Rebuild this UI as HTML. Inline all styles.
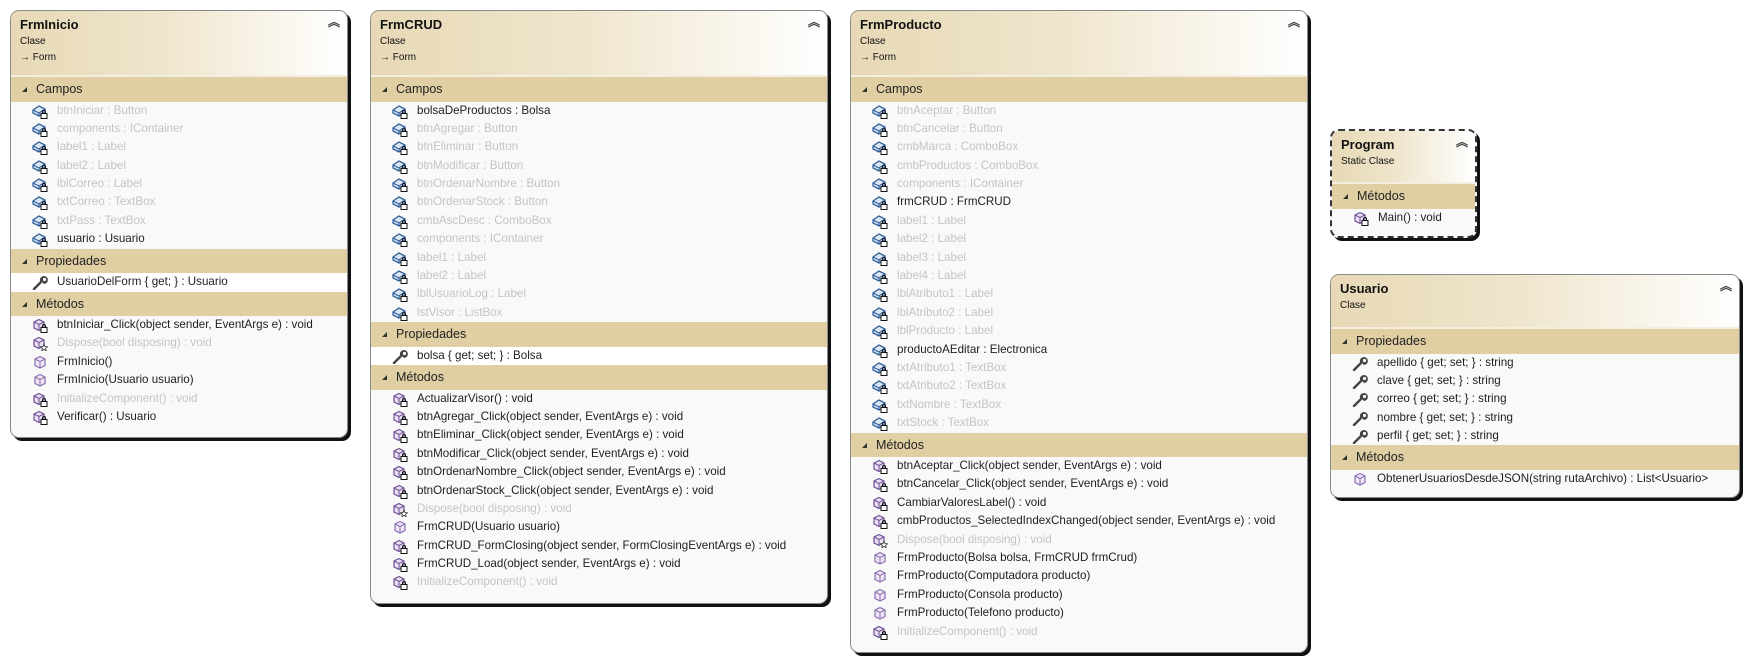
<!DOCTYPE html>
<html><head><meta charset="utf-8"><style>
body{margin:0;width:1747px;height:660px;background:#fff;position:relative;overflow:hidden;font-family:"Liberation Sans",sans-serif;}
.b{position:absolute;border:1px solid #8a8a8a;border-radius:9px;background:#f9f9f9;box-shadow:3px 3px 0 #111;overflow:hidden;box-sizing:border-box}
.h{height:66px;background:linear-gradient(90deg,#e7d9b6 0%,#efe5cc 45%,#fff 100%);position:relative;border-bottom:2px solid #f4eee0;box-sizing:border-box}
.t{position:absolute;left:9px;top:6px;font-weight:bold;font-size:13px;color:#111}
.s{position:absolute;left:9px;top:25px;font-size:10px;color:#111}
.s2{position:absolute;left:9px;top:41px;font-size:10px;color:#111}
.ch{position:absolute;right:7px;top:2px;font-size:12px;font-weight:bold;color:#444}
.bar{height:24.5px;background:#dfcfa3;font-size:12.5px;color:#222;line-height:24.5px;position:relative;padding-left:25px}
.bar:before{content:"";position:absolute;left:11px;top:10px;border-left:5px solid transparent;border-bottom:5px solid #333}
.r{height:18.4px;line-height:18.4px;font-size:11.6px;color:#1e1e1e;padding-left:46px;position:relative;white-space:nowrap}
.r.g{color:#c4c4c4}
.r svg{position:absolute;left:21px;top:2px;width:16px;height:15px}
.w{background:#fff}
</style></head><body>
<svg width="0" height="0" style="position:absolute"><defs>
<symbol id="f" viewBox="0 0 16 15"><path d="M1 6 L7 2 L13 5 L13 8 L7 12 L1 9Z" fill="#dbe6f3" stroke="#2f5f99" stroke-width="1.3"/><path d="M1 6 L7 9 L13 5 M7 9 L7 12" fill="none" stroke="#2f5f99" stroke-width="1.1"/><rect x="9" y="9.5" width="6" height="5" fill="#fff" stroke="#111"/><path d="M10.5 9.5V8a1.5 1.5 0 0 1 3 0v1.5" fill="none" stroke="#111"/></symbol>
<symbol id="m" viewBox="0 0 16 15"><path d="M2 4 L7 1.5 L12 4 L12 10 L7 12.5 L2 10Z" fill="#e9dff3" stroke="#6d4f94" stroke-width="1.2"/><path d="M2 4 L7 6.5 L12 4 M7 6.5V12.5" fill="none" stroke="#6d4f94"/><rect x="9" y="9.5" width="6" height="5" fill="#fff" stroke="#111"/><path d="M10.5 9.5V8a1.5 1.5 0 0 1 3 0v1.5" fill="none" stroke="#111"/></symbol>
<symbol id="d" viewBox="0 0 16 15"><path d="M2 4 L7 1.5 L12 4 L12 10 L7 12.5 L2 10Z" fill="#e9dff3" stroke="#6d4f94" stroke-width="1.2"/><path d="M2 4 L7 6.5 L12 4 M7 6.5V12.5" fill="none" stroke="#6d4f94"/><path d="M12 8 L13 10.5 L15.5 10.8 L13.6 12.3 L14.2 14.8 L12 13.4 L9.8 14.8 L10.4 12.3 L8.5 10.8 L11 10.5Z" fill="#fff" stroke="#333" stroke-width=".8"/></symbol>
<symbol id="c" viewBox="0 0 16 15"><path d="M3 4 L8 1.5 L13 4 L13 10.5 L8 13 L3 10.5Z" fill="#eee6f5" stroke="#8a6fb0" stroke-width="1.2"/><path d="M3 4 L8 6.5 L13 4 M8 6.5V13" fill="none" stroke="#8a6fb0"/></symbol>
<symbol id="p" viewBox="0 0 16 15"><path d="M2 14 L9 7" stroke="#444" stroke-width="2.4" stroke-linecap="round"/><path d="M8 6 A4 4 0 1 1 12 9 L10 7 Z" fill="#444"/><circle cx="12.5" cy="4.5" r="1.6" fill="#f9f9f9"/></symbol>
</defs></svg>

<div class="b" style="left:10px;top:10px;width:338px;height:428px">
<div class="h"><div class="t">FrmInicio</div><div class="s">Clase</div><div class="s2">→ Form</div><div class="ch">︽</div></div>
<div class="bar">Campos</div>
<div class="r g"><svg><use href="#f"/></svg>btnIniciar : Button</div>
<div class="r g"><svg><use href="#f"/></svg>components : IContainer</div>
<div class="r g"><svg><use href="#f"/></svg>label1 : Label</div>
<div class="r g"><svg><use href="#f"/></svg>label2 : Label</div>
<div class="r g"><svg><use href="#f"/></svg>lblCorreo : Label</div>
<div class="r g"><svg><use href="#f"/></svg>txtCorreo : TextBox</div>
<div class="r g"><svg><use href="#f"/></svg>txtPass : TextBox</div>
<div class="r"><svg><use href="#f"/></svg>usuario : Usuario</div>
<div class="bar">Propiedades</div>
<div class="r w"><svg><use href="#p"/></svg>UsuarioDelForm { get; } : Usuario</div>
<div class="bar">Métodos</div>
<div class="r"><svg><use href="#m"/></svg>btnIniciar_Click(object sender, EventArgs e) : void</div>
<div class="r g"><svg><use href="#d"/></svg>Dispose(bool disposing) : void</div>
<div class="r"><svg><use href="#c"/></svg>FrmInicio()</div>
<div class="r"><svg><use href="#c"/></svg>FrmInicio(Usuario usuario)</div>
<div class="r g"><svg><use href="#m"/></svg>InitializeComponent() : void</div>
<div class="r"><svg><use href="#m"/></svg>Verificar() : Usuario</div>
</div>

<div class="b" style="left:370px;top:10px;width:458px;height:594px">
<div class="h"><div class="t">FrmCRUD</div><div class="s">Clase</div><div class="s2">→ Form</div><div class="ch">︽</div></div>
<div class="bar">Campos</div>
<div class="r"><svg><use href="#f"/></svg>bolsaDeProductos : Bolsa</div>
<div class="r g"><svg><use href="#f"/></svg>btnAgregar : Button</div>
<div class="r g"><svg><use href="#f"/></svg>btnEliminar : Button</div>
<div class="r g"><svg><use href="#f"/></svg>btnModificar : Button</div>
<div class="r g"><svg><use href="#f"/></svg>btnOrdenarNombre : Button</div>
<div class="r g"><svg><use href="#f"/></svg>btnOrdenarStock : Button</div>
<div class="r g"><svg><use href="#f"/></svg>cmbAscDesc : ComboBox</div>
<div class="r g"><svg><use href="#f"/></svg>components : IContainer</div>
<div class="r g"><svg><use href="#f"/></svg>label1 : Label</div>
<div class="r g"><svg><use href="#f"/></svg>label2 : Label</div>
<div class="r g"><svg><use href="#f"/></svg>lblUsuarioLog : Label</div>
<div class="r g"><svg><use href="#f"/></svg>lstVisor : ListBox</div>
<div class="bar">Propiedades</div>
<div class="r w"><svg><use href="#p"/></svg>bolsa { get; set; } : Bolsa</div>
<div class="bar">Métodos</div>
<div class="r"><svg><use href="#m"/></svg>ActualizarVisor() : void</div>
<div class="r"><svg><use href="#m"/></svg>btnAgregar_Click(object sender, EventArgs e) : void</div>
<div class="r"><svg><use href="#m"/></svg>btnEliminar_Click(object sender, EventArgs e) : void</div>
<div class="r"><svg><use href="#m"/></svg>btnModificar_Click(object sender, EventArgs e) : void</div>
<div class="r"><svg><use href="#m"/></svg>btnOrdenarNombre_Click(object sender, EventArgs e) : void</div>
<div class="r"><svg><use href="#m"/></svg>btnOrdenarStock_Click(object sender, EventArgs e) : void</div>
<div class="r g"><svg><use href="#d"/></svg>Dispose(bool disposing) : void</div>
<div class="r"><svg><use href="#c"/></svg>FrmCRUD(Usuario usuario)</div>
<div class="r"><svg><use href="#m"/></svg>FrmCRUD_FormClosing(object sender, FormClosingEventArgs e) : void</div>
<div class="r"><svg><use href="#m"/></svg>FrmCRUD_Load(object sender, EventArgs e) : void</div>
<div class="r g"><svg><use href="#m"/></svg>InitializeComponent() : void</div>
</div>

<div class="b" style="left:850px;top:10px;width:458px;height:643px">
<div class="h"><div class="t">FrmProducto</div><div class="s">Clase</div><div class="s2">→ Form</div><div class="ch">︽</div></div>
<div class="bar">Campos</div>
<div class="r g"><svg><use href="#f"/></svg>btnAceptar : Button</div>
<div class="r g"><svg><use href="#f"/></svg>btnCancelar : Button</div>
<div class="r g"><svg><use href="#f"/></svg>cmbMarca : ComboBox</div>
<div class="r g"><svg><use href="#f"/></svg>cmbProductos : ComboBox</div>
<div class="r g"><svg><use href="#f"/></svg>components : IContainer</div>
<div class="r"><svg><use href="#f"/></svg>frmCRUD : FrmCRUD</div>
<div class="r g"><svg><use href="#f"/></svg>label1 : Label</div>
<div class="r g"><svg><use href="#f"/></svg>label2 : Label</div>
<div class="r g"><svg><use href="#f"/></svg>label3 : Label</div>
<div class="r g"><svg><use href="#f"/></svg>label4 : Label</div>
<div class="r g"><svg><use href="#f"/></svg>lblAtributo1 : Label</div>
<div class="r g"><svg><use href="#f"/></svg>lblAtributo2 : Label</div>
<div class="r g"><svg><use href="#f"/></svg>lblProducto : Label</div>
<div class="r"><svg><use href="#f"/></svg>productoAEditar : Electronica</div>
<div class="r g"><svg><use href="#f"/></svg>txtAtributo1 : TextBox</div>
<div class="r g"><svg><use href="#f"/></svg>txtAtributo2 : TextBox</div>
<div class="r g"><svg><use href="#f"/></svg>txtNombre : TextBox</div>
<div class="r g"><svg><use href="#f"/></svg>txtStock : TextBox</div>
<div class="bar">Métodos</div>
<div class="r"><svg><use href="#m"/></svg>btnAceptar_Click(object sender, EventArgs e) : void</div>
<div class="r"><svg><use href="#m"/></svg>btnCancelar_Click(object sender, EventArgs e) : void</div>
<div class="r"><svg><use href="#m"/></svg>CambiarValoresLabel() : void</div>
<div class="r"><svg><use href="#m"/></svg>cmbProductos_SelectedIndexChanged(object sender, EventArgs e) : void</div>
<div class="r g"><svg><use href="#d"/></svg>Dispose(bool disposing) : void</div>
<div class="r"><svg><use href="#c"/></svg>FrmProducto(Bolsa bolsa, FrmCRUD frmCrud)</div>
<div class="r"><svg><use href="#c"/></svg>FrmProducto(Computadora producto)</div>
<div class="r"><svg><use href="#c"/></svg>FrmProducto(Consola producto)</div>
<div class="r"><svg><use href="#c"/></svg>FrmProducto(Telefono producto)</div>
<div class="r g"><svg><use href="#m"/></svg>InitializeComponent() : void</div>
</div>

<div class="b" style="left:1330px;top:129px;width:147px;height:109px;border:2px dashed #333">
<div class="h" style="height:53px"><div class="t">Program</div><div class="s">Static Clase</div><div class="ch">︽</div></div>
<div class="bar">Métodos</div>
<div class="r"><svg><use href="#m"/></svg>Main() : void</div>
</div>

<div class="b" style="left:1330px;top:274px;width:410px;height:224px">
<div class="h" style="height:54px"><div class="t">Usuario</div><div class="s">Clase</div><div class="ch">︽</div></div>
<div class="bar">Propiedades</div>
<div class="r"><svg><use href="#p"/></svg>apellido { get; set; } : string</div>
<div class="r"><svg><use href="#p"/></svg>clave { get; set; } : string</div>
<div class="r"><svg><use href="#p"/></svg>correo { get; set; } : string</div>
<div class="r"><svg><use href="#p"/></svg>nombre { get; set; } : string</div>
<div class="r"><svg><use href="#p"/></svg>perfil { get; set; } : string</div>
<div class="bar">Métodos</div>
<div class="r"><svg><use href="#c"/></svg>ObtenerUsuariosDesdeJSON(string rutaArchivo) : List&lt;Usuario&gt;</div>
</div>
</body></html>
